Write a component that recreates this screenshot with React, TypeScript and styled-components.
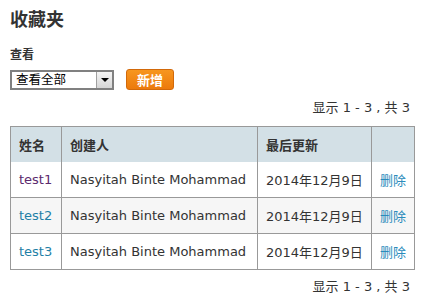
import { createGlobalStyle } from 'styled-components';
import styled from 'styled-components';

const GlobalStyle = createGlobalStyle`
  body {
    margin: 0;
    background: #fff;
    font-family: 'DejaVu Sans', 'Noto Sans CJK SC', sans-serif;
    color: #333;
  }
`;

const Page = styled.div`
  padding: 8px 19px 8px 10px;
`;

const Title = styled.h2`
  margin: 0;
  font-size: 18px;
  line-height: 24px;
  font-weight: bold;
  color: #333;
`;

const Label = styled.div`
  margin-top: 15px;
  font-size: 12px;
  line-height: 16px;
  font-weight: bold;
`;

const Toolbar = styled.div`
  margin-top: 6px;
  display: flex;
  align-items: center;
  gap: 12px;
`;

const SelectBox = styled.div`
  display: flex;
  align-items: stretch;
  width: 100px;
  height: 16px;
  border: 2px solid #808080;
  background: #fff;
`;

const Select = styled.select`
  appearance: none;
  flex: 1;
  min-width: 0;
  border: 0;
  outline: 0;
  padding: 0 0 0 4px;
  background: transparent;
  font-family: 'DejaVu Sans', 'Noto Sans CJK SC', sans-serif;
  font-size: 12.5px;
  color: #000;
`;

const Arrow = styled.div`
  width: 15px;
  display: flex;
  align-items: center;
  justify-content: center;
  background: linear-gradient(#f4f4f4, #d6d6d6);
  border-left: 1px solid #a0a0a0;
  &::after {
    content: '';
    border-left: 4px solid transparent;
    border-right: 4px solid transparent;
    border-top: 4px solid #000;
  }
`;

const AddButton = styled.button`
  width: 48px;
  height: 21px;
  padding: 0;
  border: 1px solid #d2690a;
  border-radius: 3px;
  background: linear-gradient(#f7961f, #ec7a0c);
  color: #fff;
  font-family: 'DejaVu Sans', 'Noto Sans CJK SC', sans-serif;
  font-size: 13px;
  font-weight: bold;
`;

const Pager = styled.div<{ top: number }>`
  margin-top: ${(p) => p.top}px;
  text-align: right;
  font-size: 13px;
  line-height: 16px;
  color: #333;
  padding-right: 4px;
`;

const Table = styled.table`
  margin-top: 10px;
  width: 405px;
  border-collapse: collapse;
  border: 1px solid #999;
  font-size: 13px;
`;

const Th = styled.th<{ w: number }>`
  width: ${(p) => p.w}px;
  height: 35px;
  padding: 0 8px;
  text-align: left;
  font-weight: bold;
  background: #d3e0e6;
  border-left: 1px solid #999;
  border-right: 1px solid #999;
  color: #333;
`;

const Row = styled.tr<{ alt?: boolean }>`
  background: ${(p) => (p.alt ? '#f6f6f6' : '#fff')};
  border-top: 1px solid #999;
  &:first-child {
    border-top: 0;
  }
`;

const Td = styled.td`
  height: 35px;
  padding: 0 8px;
  border: 1px solid #999;
  border-top: 0;
  border-bottom: 0;
  color: #333;
  white-space: nowrap;
`;

const NameLink = styled.a<{ visited?: boolean }>`
  color: ${(p) => (p.visited ? '#5c2a6e' : '#1f7fa6')};
  text-decoration: none;
`;

const DeleteLink = styled.a`
  color: #2a8bbb;
  text-decoration: none;
`;

const rows = [
  { name: 'test1', visited: true },
  { name: 'test2' },
  { name: 'test3' },
];

export default function App() {
  return (
    <>
      <GlobalStyle />
      <Page>
        <Title>收藏夹</Title>
        <Label>查看</Label>
        <Toolbar>
          <SelectBox>
            <Select defaultValue="all">
              <option value="all">查看全部</option>
            </Select>
            <Arrow />
          </SelectBox>
          <AddButton>新增</AddButton>
        </Toolbar>
        <Pager top={10}>显示 1 - 3 , 共 3</Pager>
        <Table>
          <thead>
            <tr>
              <Th w={34}>姓名</Th>
              <Th w={179}>创建人</Th>
              <Th w={97}>最后更新</Th>
              <Th w={26}></Th>
            </tr>
          </thead>
          <tbody>
            {rows.map((r, i) => (
              <Row key={r.name} alt={i % 2 === 1}>
                <Td>
                  <NameLink href="#" visited={r.visited}>
                    {r.name}
                  </NameLink>
                </Td>
                <Td>Nasyitah Binte Mohammad</Td>
                <Td>2014年12月9日</Td>
                <Td>
                  <DeleteLink href="#">删除</DeleteLink>
                </Td>
              </Row>
            ))}
          </tbody>
        </Table>
        <Pager top={9}>显示 1 - 3 , 共 3</Pager>
      </Page>
    </>
  );
}
